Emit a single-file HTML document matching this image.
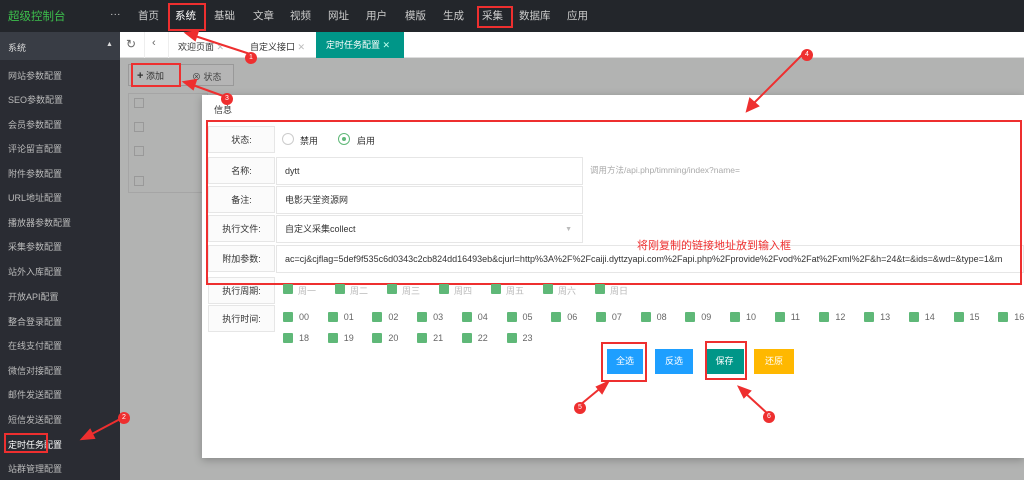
<!DOCTYPE html>
<html><head><meta charset="utf-8"><style>
*{margin:0;padding:0;box-sizing:border-box}
body{width:1024px;height:480px;overflow:hidden;position:relative;background:#b2b3b2;font-family:"Liberation Sans","Noto Sans CJK SC",sans-serif;font-size:9px;color:#333}
.abs{position:absolute}
.top{left:0;top:0;width:1024px;height:32px;background:#23262b}
.top span{position:absolute;top:8px;color:#ccc;font-size:10.5px}
.side{left:0;top:32px;width:120px;height:448px;background:#2a2c33}
.side div{position:absolute;left:8px;color:#bbb;font-size:9px}
.tabs{left:120px;top:32px;width:904px;height:26px;background:#fff;border-bottom:1px solid #ddd}
.rb{position:absolute;border:2.5px solid #ee2f2f}
.circ{position:absolute;width:12px;height:12px;border-radius:50%;background:#ee2f2f;color:#fff;font-size:7px;text-align:center;line-height:12px}
.dlg{left:202px;top:95px;width:822px;height:363px;background:#fff;box-shadow:0 2px 8px rgba(0,0,0,.25)}
.lab{position:absolute;left:208px;width:67px;height:27px;border:1px solid #e6e6e6;background:#fbfbfb;text-align:center;line-height:26px;font-size:9px}
.inp{position:absolute;left:276px;height:28px;border:1px solid #e6e6e6;padding-left:8px;line-height:27px;font-size:9px;white-space:nowrap;overflow:hidden}
.cb{position:absolute;width:10px;height:10px;background:#5fb878;border-radius:1px}
.cbt{position:absolute;color:#666;font-size:9px}
.btn{position:absolute;top:349px;height:25px;color:#fff;text-align:center;line-height:25px;font-size:9px}
</style></head><body>
<div class="abs top">
<span style="left:8px;color:#3cbf4c;font-size:11.5px;top:8px">超级控制台</span>
<span style="left:110px">···</span>
<span style="left:138px">首页</span><span style="left:175px;color:#fff">系统</span><span style="left:214px">基础</span><span style="left:253px">文章</span><span style="left:290px">视频</span><span style="left:328px">网址</span><span style="left:366px">用户</span><span style="left:405px">模版</span><span style="left:443px">生成</span><span style="left:482px">采集</span><span style="left:519px">数据库</span><span style="left:567px">应用</span>
</div>
<div class="rb" style="left:168px;top:3px;width:38px;height:28px"></div>
<div class="rb" style="left:477px;top:6px;width:36px;height:22px"></div>
<div class="abs side">
<div style="left:0;top:0;width:120px;height:28px;background:#393d45"></div>
<div style="top:9px;color:#ddd">系统</div><div style="left:106px;top:9px;color:#ddd;font-size:7px">▲</div>
<div style="top:37px">网站参数配置</div><div style="top:61px">SEO参数配置</div><div style="top:86px">会员参数配置</div><div style="top:110px">评论留言配置</div><div style="top:135px">附件参数配置</div><div style="top:159px">URL地址配置</div><div style="top:184px">播放器参数配置</div><div style="top:208px">采集参数配置</div><div style="top:233px">站外入库配置</div><div style="top:258px">开放API配置</div><div style="top:283px">整合登录配置</div><div style="top:307px">在线支付配置</div><div style="top:332px">微信对接配置</div><div style="top:356px">邮件发送配置</div><div style="top:381px">短信发送配置</div><div style="top:406px;color:#fff">定时任务配置</div><div style="top:430px">站群管理配置</div>
</div>
<div class="rb" style="left:4px;top:433px;width:44px;height:20px"></div>
<div class="abs tabs">
<span class="abs" style="left:6px;top:5px;font-size:12px;color:#666">↻</span>
<span class="abs" style="left:32px;top:5px;font-size:11px;color:#666">‹</span>
<div class="abs" style="left:24px;top:0;width:1px;height:26px;background:#eee"></div>
<div class="abs" style="left:48px;top:0;width:1px;height:26px;background:#eee"></div>
<span class="abs" style="left:58px;top:8px;font-size:9px">欢迎页面 <span style="color:#bbb">✕</span></span>
<span class="abs" style="left:130px;top:8px;font-size:9px">自定义接口 <span style="color:#bbb">✕</span></span>
<div class="abs" style="left:196px;top:0;width:88px;height:26px;background:#009688;color:#fff;font-size:9px;line-height:26px;padding-left:10px">定时任务配置 <span style="color:#bfe">✕</span></div>
</div>
<div class="abs" style="left:128px;top:64px;width:106px;height:22px;border:1px solid #999;background:#b5b5b5"></div>
<span class="abs" style="left:137px;top:69px;font-size:9px;color:#333"><b style="font-size:11px">+</b> 添加</span>
<span class="abs" style="left:192px;top:70px;font-size:9px;color:#444">⊗ 状态</span>
<div class="rb" style="left:131px;top:63px;width:50px;height:24px"></div>
<div class="abs" style="left:128px;top:93px;width:80px;height:100px;border:1px solid #a5a5a5"></div>
<div class="abs" style="left:134px;top:98px;width:10px;height:10px;border:1px solid #999"></div>
<div class="abs" style="left:134px;top:122px;width:10px;height:10px;border:1px solid #999"></div>
<div class="abs" style="left:134px;top:146px;width:10px;height:10px;border:1px solid #999"></div>
<div class="abs" style="left:134px;top:176px;width:10px;height:10px;border:1px solid #999"></div>
<div class="abs dlg"></div>
<span class="abs" style="left:214px;top:103px;font-size:9px">信息</span>
<div class="lab" style="top:126px">状态:</div>
<div class="abs" style="left:282px;top:133px;width:12px;height:12px;border:1px solid #ccc;border-radius:50%"></div><span class="cbt" style="left:300px;top:134px;color:#333">禁用</span>
<div class="abs" style="left:338px;top:133px;width:12px;height:12px;border:1px solid #5fb878;border-radius:50%"></div><div class="abs" style="left:342px;top:137px;width:4px;height:4px;background:#5fb878;border-radius:50%"></div><span class="cbt" style="left:357px;top:134px;color:#333">启用</span>
<div class="lab" style="top:157px">名称:</div><div class="inp" style="top:157px;width:307px">dytt</div>
<span class="abs" style="left:590px;top:164px;font-size:8.5px;color:#aaa">调用方法/api.php/timming/index?name=</span>
<div class="lab" style="top:186px">备注:</div><div class="inp" style="top:186px;width:307px">电影天堂资源网</div>
<div class="lab" style="top:215px">执行文件:</div><div class="inp" style="top:215px;width:307px">自定义采集collect<span style="position:absolute;right:10px;color:#bbb;font-size:7px">▼</span></div>
<div class="lab" style="top:245px">附加参数:</div><div class="inp" style="top:245px;width:748px">ac=cj&amp;cjflag=5def9f535c6d0343c2cb824dd16493eb&amp;cjurl=http%3A%2F%2Fcaiji.dyttzyapi.com%2Fapi.php%2Fprovide%2Fvod%2Fat%2Fxml%2F&amp;h=24&amp;t=&amp;ids=&amp;wd=&amp;type=1&amp;m</div>
<span class="abs" style="left:637px;top:237px;font-size:11px;color:#ee2f2f">将刚复制的链接地址放到输入框</span>
<div class="lab" style="top:277px">执行周期:</div>
<div class="lab" style="top:305px">执行时间:</div>
<div class="rb" style="left:206px;top:120px;width:816px;height:165px"></div>
<div id="cbs"></div>
<div class="btn" style="left:607px;width:36px;background:#1e9fff">全选</div>
<div class="btn" style="left:655px;width:38px;background:#1e9fff">反选</div>
<div class="btn" style="left:705px;width:39px;background:#009688">保存</div>
<div class="btn" style="left:754px;width:40px;background:#ffb800">还原</div>
<div class="rb" style="left:601px;top:342px;width:46px;height:40px"></div>
<div class="rb" style="left:705px;top:341px;width:42px;height:39px"></div>
<svg class="abs" style="left:0;top:0" width="1024" height="480">
<g stroke="#ee2f2f" stroke-width="2" fill="#ee2f2f">
<line x1="250" y1="54" x2="192" y2="35"/><polygon points="186,33 198,31 195,40"/>
<line x1="226" y1="97" x2="190" y2="84"/><polygon points="184,82 196,80 193,89"/>
<line x1="802" y1="55" x2="752" y2="105"/><polygon points="747,111 750,99 758,106"/>
<line x1="122" y1="418" x2="88" y2="436"/><polygon points="82,439 90,430 94,438"/>
<line x1="580" y1="405" x2="603" y2="386"/><polygon points="608,382 602,393 597,387"/>
<line x1="768" y1="414" x2="744" y2="392"/><polygon points="739,387 750,391 744,397"/>
</g></svg>
<div class="circ" style="left:245px;top:52px">1</div>
<div class="circ" style="left:118px;top:412px">2</div>
<div class="circ" style="left:221px;top:93px">3</div>
<div class="circ" style="left:801px;top:49px">4</div>
<div class="circ" style="left:574px;top:402px">5</div>
<div class="circ" style="left:763px;top:411px">6</div>
<script>
var h='',d=['周一','周二','周三','周四','周五','周六','周日'];
for(var i=0;i<7;i++){var x=283+i*52;h+='<div class="cb" style="left:'+x+'px;top:284px"></div><span class="cbt" style="left:'+(x+15)+'px;top:284px;color:#bbb">'+d[i]+'</span>';}
for(var i=0;i<24;i++){var r=i<18?0:1,c=i<18?i:i-18,x=283+c*44.7,y=r?333:312;h+='<div class="cb" style="left:'+x+'px;top:'+y+'px"></div><span class="cbt" style="left:'+(x+16)+'px;top:'+y+'px">'+(i<10?'0'+i:i)+'</span>';}
document.getElementById('cbs').innerHTML=h;
</script>
</body></html>
